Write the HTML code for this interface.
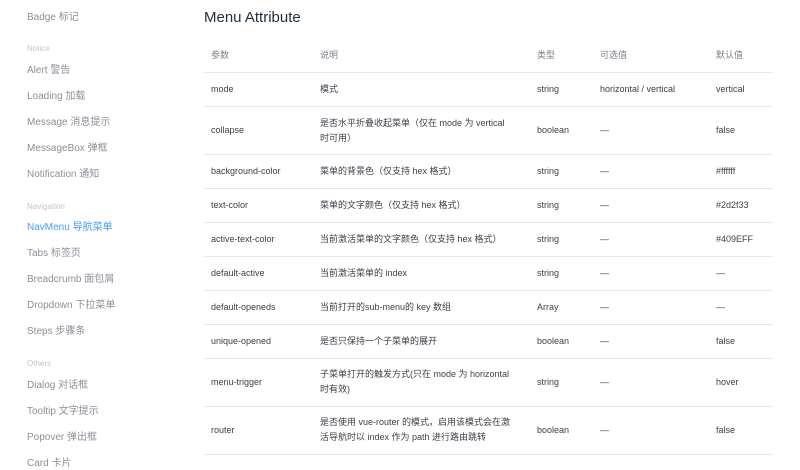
<!DOCTYPE html>
<html><head><meta charset="utf-8"><style>
body{margin:0;width:800px;height:465px;overflow:hidden;background:#fff;font-family:"Liberation Sans","Noto Sans CJK SC",sans-serif;position:relative}
.s{position:absolute;left:27px;font-size:10px;color:#8a8f99;line-height:12px}
.g{position:absolute;left:27px;font-size:8px;color:#c0c4cc;line-height:10px}
.a{color:#409eff}
h1{position:absolute;left:204px;top:9px;margin:0;font-size:15px;font-weight:normal;color:#1f2f3d;line-height:18px}
.l{position:absolute;left:204px;width:569px;height:1px;background:#e6e8ec}
.c{position:absolute;font-size:9px;color:#3a3f47;line-height:15px;white-space:nowrap}
.h{color:#7a808a}
</style></head><body>
<div class="s" style="top:12px">Badge 标记</div>
<div class="g" style="top:44px">Notice</div>
<div class="s" style="top:65px">Alert 警告</div>
<div class="s" style="top:91px">Loading 加载</div>
<div class="s" style="top:117px">Message 消息提示</div>
<div class="s" style="top:143px">MessageBox 弹框</div>
<div class="s" style="top:169px">Notification 通知</div>
<div class="g" style="top:202px">Navigation</div>
<div class="s a" style="top:222px">NavMenu 导航菜单</div>
<div class="s" style="top:248px">Tabs 标签页</div>
<div class="s" style="top:274px">Breadcrumb 面包屑</div>
<div class="s" style="top:300px">Dropdown 下拉菜单</div>
<div class="s" style="top:326px">Steps 步骤条</div>
<div class="g" style="top:359px">Others</div>
<div class="s" style="top:380px">Dialog 对话框</div>
<div class="s" style="top:406px">Tooltip 文字提示</div>
<div class="s" style="top:432px">Popover 弹出框</div>
<div class="s" style="top:458px">Card 卡片</div>
<h1>Menu Attribute</h1>
<div class="l" style="top:72px"></div><div class="l" style="top:106px"></div><div class="l" style="top:154px"></div><div class="l" style="top:188px"></div><div class="l" style="top:222px"></div><div class="l" style="top:256px"></div><div class="l" style="top:290px"></div><div class="l" style="top:324px"></div><div class="l" style="top:358px"></div><div class="l" style="top:406px"></div><div class="l" style="top:454px"></div>
<div class="c h" style="top:48px;left:211px">参数</div><div class="c h" style="top:48px;left:320px">说明</div><div class="c h" style="top:48px;left:537px">类型</div><div class="c h" style="top:48px;left:600px">可选值</div><div class="c h" style="top:48px;left:716px">默认值</div>

<div class="c" style="top:82px;left:211px">mode</div><div class="c" style="top:82px;left:320px">模式</div><div class="c" style="top:82px;left:537px">string</div><div class="c" style="top:82px;left:600px">horizontal / vertical</div><div class="c" style="top:82px;left:716px">vertical</div>

<div class="c" style="top:123px;left:211px">collapse</div><div class="c" style="top:116px;left:320px">是否水平折叠收起菜单（仅在 mode 为 vertical<br>时可用）</div><div class="c" style="top:123px;left:537px">boolean</div><div class="c" style="top:123px;left:600px">—</div><div class="c" style="top:123px;left:716px">false</div>

<div class="c" style="top:164px;left:211px">background-color</div><div class="c" style="top:164px;left:320px">菜单的背景色（仅支持 hex 格式）</div><div class="c" style="top:164px;left:537px">string</div><div class="c" style="top:164px;left:600px">—</div><div class="c" style="top:164px;left:716px">#ffffff</div>

<div class="c" style="top:198px;left:211px">text-color</div><div class="c" style="top:198px;left:320px">菜单的文字颜色（仅支持 hex 格式）</div><div class="c" style="top:198px;left:537px">string</div><div class="c" style="top:198px;left:600px">—</div><div class="c" style="top:198px;left:716px">#2d2f33</div>

<div class="c" style="top:232px;left:211px">active-text-color</div><div class="c" style="top:232px;left:320px">当前激活菜单的文字颜色（仅支持 hex 格式）</div><div class="c" style="top:232px;left:537px">string</div><div class="c" style="top:232px;left:600px">—</div><div class="c" style="top:232px;left:716px">#409EFF</div>

<div class="c" style="top:266px;left:211px">default-active</div><div class="c" style="top:266px;left:320px">当前激活菜单的 index</div><div class="c" style="top:266px;left:537px">string</div><div class="c" style="top:266px;left:600px">—</div><div class="c" style="top:266px;left:716px">—</div>

<div class="c" style="top:300px;left:211px">default-openeds</div><div class="c" style="top:300px;left:320px">当前打开的sub-menu的 key 数组</div><div class="c" style="top:300px;left:537px">Array</div><div class="c" style="top:300px;left:600px">—</div><div class="c" style="top:300px;left:716px">—</div>

<div class="c" style="top:334px;left:211px">unique-opened</div><div class="c" style="top:334px;left:320px">是否只保持一个子菜单的展开</div><div class="c" style="top:334px;left:537px">boolean</div><div class="c" style="top:334px;left:600px">—</div><div class="c" style="top:334px;left:716px">false</div>

<div class="c" style="top:375px;left:211px">menu-trigger</div><div class="c" style="top:367px;left:320px">子菜单打开的触发方式(只在 mode 为 horizontal<br>时有效)</div><div class="c" style="top:375px;left:537px">string</div><div class="c" style="top:375px;left:600px">—</div><div class="c" style="top:375px;left:716px">hover</div>

<div class="c" style="top:423px;left:211px">router</div><div class="c" style="top:415px;left:320px">是否使用 vue-router 的模式，启用该模式会在激<br>活导航时以 index 作为 path 进行路由跳转</div><div class="c" style="top:423px;left:537px">boolean</div><div class="c" style="top:423px;left:600px">—</div><div class="c" style="top:423px;left:716px">false</div>
</body></html>
